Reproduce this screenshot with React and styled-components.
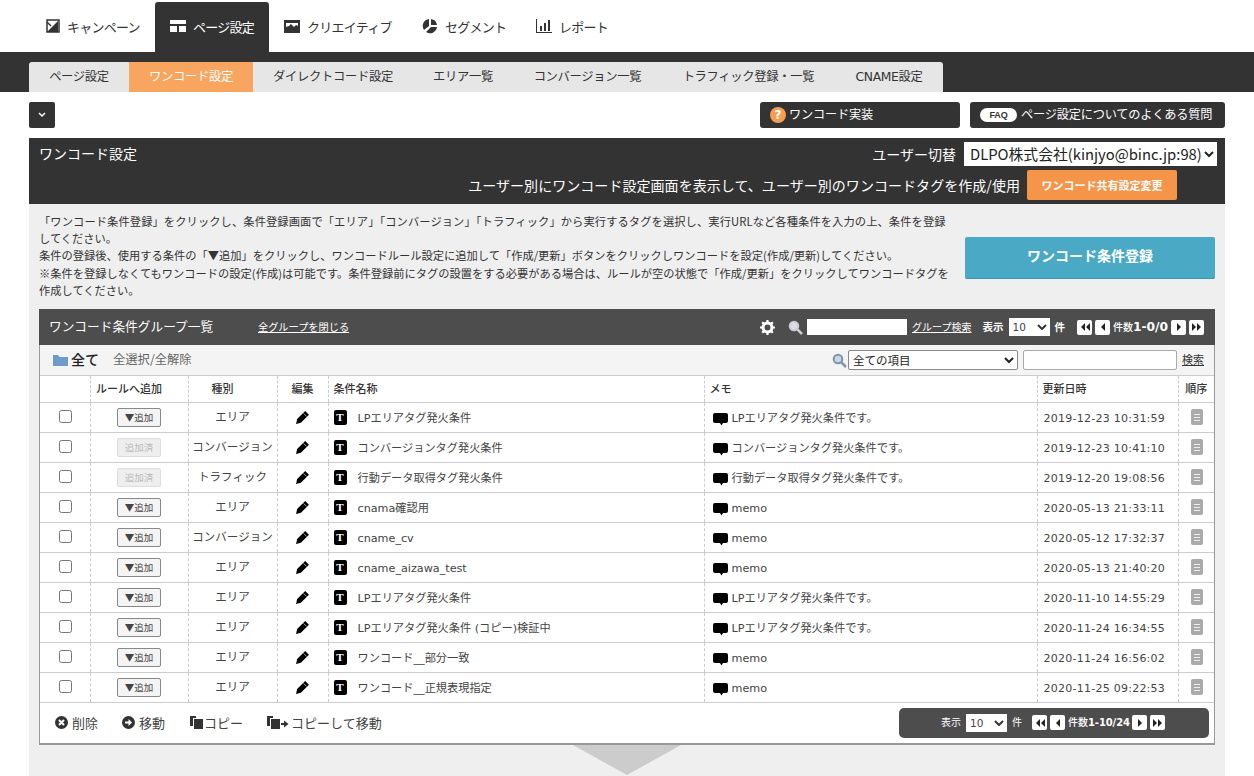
import React from "react";
import styled, { createGlobalStyle } from "styled-components";

const Global = createGlobalStyle`
  html, body { margin: 0; padding: 0; background: #fff; overflow: hidden; }
  body {
    width: 1254px;
    height: 776px;
    font-family: "DejaVu Sans", "Noto Sans CJK JP", sans-serif;
    font-size: 12px;
    color: #333;
  }
  * { box-sizing: border-box; }
`;

const Page = styled.div`
  width: 1254px;
  height: 776px;
  overflow: hidden;
`;

const MainNav = styled.nav`
  height: 52px;
  padding: 2px 0 0 31px;
  display: flex;
  align-items: stretch;
`;

const MainItem = styled.a`
  display: flex;
  align-items: center;
  gap: 7px;
  width: ${(p) => p.$w}px;
  padding: 0 0 2px 15px;
  font-family: "Noto Sans CJK JP", sans-serif;
  font-size: 13px;
  letter-spacing: -0.75px;
  color: ${(p) => (p.$active ? "#fff" : "#333")};
  background: ${(p) => (p.$active ? "#333" : "transparent")};
  border-radius: 3px 3px 0 0;
  svg { flex: none; }
`;

const SubBand = styled.div`
  height: 40px;
  background: #333;
  padding: 10px 0 0 29px;
  display: flex;
`;

const SubTabs = styled.div`
  display: flex;
  height: 30px;
  background: #e6e6e6;
  border-radius: 3px 3px 0 0;
  overflow: hidden;
`;

const SubTab = styled.a`
  width: ${(p) => p.$w}px;
  padding-bottom: 2px;
  display: flex;
  align-items: center;
  justify-content: center;
  font-family: "DejaVu Sans", "Noto Sans CJK JP", sans-serif;
  font-size: 12.3px;
  letter-spacing: -0.3px;
  color: ${(p) => (p.$active ? "#fff" : "#333")};
  background: ${(p) => (p.$active ? "#f7a55f" : "transparent")};
`;

const ToolBar = styled.div`
  height: 46px;
  padding: 10px 29px 0;
  display: flex;
  gap: 10px;
`;

const Chevron = styled.button`
  width: 26px;
  height: 26px;
  margin-right: auto;
  padding: 0;
  border: none;
  border-radius: 2px;
  background: #333;
  display: flex;
  align-items: center;
  justify-content: center;
`;

const HelpButton = styled.a`
  width: ${(p) => p.$w}px;
  height: 26px;
  padding: 0 0 2px 10px;
  display: flex;
  align-items: center;
  gap: 3px;
  border-radius: 3px;
  background: #333;
  color: #fff;
  font-family: "Noto Sans CJK JP", sans-serif;
  font-size: 12.2px;
  letter-spacing: -0.2px;
`;

const Question = styled.span`
  width: 16px;
  height: 16px;
  margin-top: 2px;
  border-radius: 50%;
  background: #f59e4f;
  color: #fff;
  font: bold 12px/16px "DejaVu Sans", sans-serif;
  text-align: center;
`;

const FaqPill = styled.span`
  width: 37px;
  height: 14px;
  margin: 2px 1px 0 0;
  border-radius: 7px;
  background: #fff;
  color: #333;
  font: bold 9px/14px "Liberation Sans", sans-serif;
  text-align: center;
`;

const Panel = styled.section`
  margin: 0 29px;
  height: 638px;
  background: #efefef;
  position: relative;
`;

const PanelHead = styled.header`
  height: 66px;
  background: #333;
  color: #fff;
  padding: 3px 8px 0 10px;
  font-family: "Noto Sans CJK JP", sans-serif;
`;

const HeadRow = styled.div`
  height: 25px;
  display: flex;
  align-items: center;
  justify-content: space-between;
  font-size: 14px;
  > span { margin-top: -1px; }
`;

const UserSwitch = styled.div`
  display: flex;
  align-items: center;
  gap: 8px;
  font-size: 14px;
  line-height: 20px;
`;

const UserSelect = styled.select`
  width: 253px;
  height: 24px;
  padding: 0 0 0 2px;
  border: none;
  background: #fff;
  color: #222;
  font-family: "Noto Sans CJK JP", sans-serif;
  font-size: 14.8px;
`;

const ShareRow = styled.div`
  display: flex;
  justify-content: flex-end;
  align-items: center;
  gap: 7px;
  margin-top: 4px;
  padding-right: 40px;
  font-size: 14px;
  letter-spacing: 0.05px;
`;

const ShareButton = styled.a`
  width: 150px;
  height: 30px;
  border-radius: 2px;
  background: #f5954a;
  color: #fff;
  display: flex;
  align-items: center;
  justify-content: center;
  font-size: 11px;
  font-weight: 700;
  letter-spacing: 0;
`;

const Intro = styled.div`
  height: 105px;
  padding: 9px 10px 0;
  display: flex;
  justify-content: space-between;
`;

const IntroText = styled.p`
  margin: 0;
  font-family: "Noto Sans CJK JP", sans-serif;
  font-size: 11.25px;
  line-height: 17.2px;
  color: #333;
  white-space: nowrap;
`;

const WideLine = styled.span`
  letter-spacing: 0.1px;
`;

const RegisterButton = styled.a`
  width: 250px;
  height: 42px;
  margin: 24px 0 0;
  padding-bottom: 6px;
  border-radius: 2px;
  background: #4aa9c4;
  border-bottom: 1px solid #3c93ab;
  color: #fff;
  display: flex;
  align-items: center;
  justify-content: center;
  font-family: "Noto Sans CJK JP", sans-serif;
  font-size: 14px;
  font-weight: 700;
`;

const ListCard = styled.div`
  margin: 0 10px;
  height: 436px;
  border: 1px solid #999;
  border-top: none;
  border-bottom-width: 2px;
  background: #fff;
`;

const ListHead = styled.div`
  height: 36px;
  margin: 0 -1px;
  padding: 0 11px 0 10px;
  background: #4d4d4d;
  color: #fff;
  display: flex;
  align-items: center;
  font-family: "Noto Sans CJK JP", sans-serif;
`;

const ListTitle = styled.span`
  width: 209px;
  margin-top: -3px;
  font-size: 12.7px;
`;

const WhiteLink = styled.a`
  margin-top: -2px;
  font-size: ${(p) => p.$size}px;
  color: #fff;
  text-decoration: underline;
  ${(p) => p.$grow && "margin-right: auto;"}
`;

const GearSlot = styled.span`
  display: flex;
  margin-right: 13px;
`;

const HeadSearch = styled.div`
  height: 16px;
  width: 100px;
  margin: 0 5px 0 4px;
  background: #fff;
`;

const SmallSelect = styled.div`
  width: ${(p) => p.$w}px;
  height: 18px;
  padding: 0 3px 0 4px;
  margin: 0 5px;
  background: #fff;
  color: #444;
  display: flex;
  align-items: center;
  justify-content: space-between;
  font: 10.5px "DejaVu Sans", sans-serif;
`;

const BoldLabel = styled.span`
  margin-top: -2px;
  font-size: 10.5px;
  font-weight: 700;
  ${(p) => p.$ml && `margin-left: ${p.$ml}px;`}
`;

const PlainLabel = styled.span`
  margin-top: -2px;
  font-size: 10px;
`;

const Pager = styled.div`
  display: flex;
  align-items: center;
  gap: 3px;
  margin-left: ${(p) => p.$ml}px;
`;

const PageBtn = styled.span`
  width: 15px;
  height: 15px;
  border-radius: 2px;
  background: #fff;
  display: flex;
  align-items: center;
  justify-content: center;
`;

const Count = styled.span`
  width: ${(p) => p.$w}px;
  margin-top: -2px;
  font-size: 10px;
  font-weight: 500;
  white-space: nowrap;
  text-align: center;
  b {
    font-family: "DejaVu Sans", sans-serif;
    font-size: ${(p) => p.$num}px;
    font-weight: 700;
    letter-spacing: -0.1px;
  }
`;

const FilterRow = styled.div`
  height: 31px;
  padding: 0 10px 0 13px;
  background: #f4f4f4;
  border-bottom: 1px solid #ccc;
  display: flex;
  align-items: center;
  font-family: "Noto Sans CJK JP", sans-serif;
`;

const AllLabel = styled.strong`
  margin: -3px 0 0 3px;
  font-size: 14px;
  font-weight: 500;
  color: #222;
`;

const SelectAll = styled.a`
  margin: -3px auto 0 14px;
  font-size: 12.3px;
  color: #666;
`;

const FilterSelect = styled.select`
  width: 170px;
  height: 20px;
  margin-left: 1px;
  padding: 0;
  border: 1px solid #888;
  border-radius: 2px;
  background: #fff;
  color: #222;
  font-family: "Noto Sans CJK JP", sans-serif;
  font-size: 11.5px;
`;

const FilterInput = styled.input`
  width: 154px;
  height: 20px;
  margin: 0 5px;
  border: 1px solid #aaa;
  border-radius: 2px;
  background: #fff;
`;

const SearchLink = styled.a`
  margin-top: -2px;
  font-size: 11px;
  color: #333;
  text-decoration: underline;
`;

const Table = styled.table`
  width: 1174px;
  border-collapse: collapse;
  table-layout: fixed;
  font-family: "Noto Sans CJK JP", sans-serif;
  font-size: 11.5px;
`;

const Th = styled.th`
  height: 26px;
  padding: 0 ${(p) => p.$pr ?? 0}px 1px ${(p) => (p.$left ? 5 : 0)}px;
  border-bottom: 1px solid #ccc;
  border-left: 1px dashed #ccc;
  font-weight: 500;
  font-size: 11px;
  text-align: ${(p) => (p.$left ? "left" : "center")};
  color: #333;
  &:first-child { border-left: none; }
`;

const Td = styled.td`
  height: 30px;
  padding: 0 ${(p) => (p.$left ? "5px" : "0")} ${(p) => (p.$left ? 1 : 2)}px;
  border-bottom: 1px solid #ccc;
  border-left: 1px dashed #ccc;
  text-align: ${(p) => (p.$left ? "left" : "center")};
  color: #444;
  white-space: nowrap;
  &:first-child { border-left: none; }
`;

const DateText = styled.span`
  font-family: "DejaVu Sans", sans-serif;
  font-size: 11px;
  letter-spacing: 0.25px;
  color: #444;
  margin-left: 1px;
`;

const Check = styled.span`
  display: block;
  width: 13px;
  height: 13px;
  margin: 1px 0 0 19px;
  border: 1px solid #767676;
  border-radius: 2.5px;
  background: #fff;
`;

const AddButton = styled.span`
  display: flex;
  align-items: center;
  justify-content: center;
  width: 44px;
  height: 19px;
  margin: 2px auto 0;
  padding-bottom: 1px;
  border: 1px solid ${(p) => (p.$done ? "#ddd" : "#888")};
  border-radius: 2px;
  background: ${(p) => (p.$done ? "#eee" : "#f4f4f4")};
  color: ${(p) => (p.$done ? "#bbb" : "#444")};
  font-size: 9.5px;
`;

const PencilSlot = styled.span`
  display: flex;
  justify-content: center;
  margin-top: 3px;
`;

const NameCell = styled.span`
  display: flex;
  align-items: center;
  gap: 11px;
  padding-top: 3px;
  font-family: "DejaVu Sans", "Noto Sans CJK JP", sans-serif;
  font-size: 11.2px;
  line-height: 15px;
`;

const TBadge = styled.span`
  flex: none;
  width: 13px;
  height: 15px;
  margin-top: -2px;
  border-radius: 2px;
  background: #000;
  color: #fff;
  font: bold 11px/15px "Liberation Serif", serif;
  text-align: center;
`;

const MemoCell = styled.span`
  display: flex;
  align-items: center;
  gap: 4px;
  padding: 3px 0 0 3px;
  font-family: "DejaVu Sans", "Noto Sans CJK JP", sans-serif;
  font-size: 11.2px;
  line-height: 15px;
  svg {
    flex: none;
    margin-top: 2px;
  }
`;

const Handle = styled.span`
  display: flex;
  flex-direction: column;
  gap: 2px;
  align-items: center;
  justify-content: center;
  width: 12px;
  height: 16px;
  margin: 2px 0 0 12px;
  border-radius: 2px;
  background: #aaa;
  i {
    width: 6px;
    height: 1px;
    background: #eee;
  }
`;

const Footer = styled.div`
  height: 41px;
  padding: 0 5px 1px 15px;
  display: flex;
  align-items: center;
`;

const Action = styled.a`
  display: flex;
  align-items: center;
  gap: ${(p) => p.$gap}px;
  margin-right: ${(p) => p.$mr}px;
  font-family: "Noto Sans CJK JP", sans-serif;
  font-size: 13px;
  line-height: 18px;
  color: #444;
`;

const FootPager = styled.div`
  width: 310px;
  height: 30px;
  margin-left: auto;
  padding-left: 42px;
  border-radius: 5px;
  background: #4d4d4d;
  color: #fff;
  display: flex;
  align-items: center;
  font-family: "Noto Sans CJK JP", sans-serif;
`;

const Arrow = styled.div`
  width: 0;
  height: 0;
  position: absolute;
  left: 544px;
  bottom: 1px;
  border-left: 54px solid transparent;
  border-right: 54px solid transparent;
  border-top: 30px solid #ccc;
`;

const SelArrow = () => (
  <svg width="10" height="6" viewBox="0 0 10 6">
    <path d="M1 1l4 4 4-4" fill="none" stroke="#333" strokeWidth="2" />
  </svg>
);

const PageIcon = ({ kind }) => {
  const paths = {
    first: "M5 1v8L1 5zM10 1v8L6 5z",
    prev: "M7 1v8L3 5z",
    next: "M3 1v8l4-4z",
    last: "M0 1v8l4-4zM5 1v8l4-4z",
  };
  return (
    <PageBtn>
      <svg width="10" height="10" viewBox="0 0 10 10">
        <path d={paths[kind]} fill="#222" />
      </svg>
    </PageBtn>
  );
};

const Pencil = () => (
  <svg width="15" height="15" viewBox="0 0 14 14">
    <path d="M9.500 1L13 4.500 5.500 12 1 13l1-4.500z" fill="#000" />
    <path d="M8 3.200l2.800 2.800" stroke="#fff" strokeWidth="0.6" />
  </svg>
);

const Balloon = () => (
  <svg width="15" height="14" viewBox="0 0 15 14">
    <path d="M2 1h11a2 2 0 0 1 2 2v6a2 2 0 0 1-2 2H10l-1.500 2.500L7 11H2a2 2 0 0 1-2-2V3a2 2 0 0 1 2-2z" fill="#000" />
  </svg>
);

const Magnifier = ({ glass = "#c5d8ea", rim = "#7f95a8" }) => (
  <svg width="15" height="15" viewBox="0 0 15 15">
    <circle cx="6" cy="6" r="4.300" fill={glass} stroke={rim} strokeWidth="2" />
    <path d="M9.500 9.500L14 14" stroke={rim} strokeWidth="2.500" />
  </svg>
);

const Gear = () => (
  <svg width="15" height="15" viewBox="0 0 15 15">
    <circle cx="7.500" cy="7.500" r="4.500" fill="none" stroke="#fff" strokeWidth="3" />
    <path
      d="M7.500 0v15M0 7.500h15M2.200 2.200l10.600 10.600M12.800 2.200L2.200 12.800"
      stroke="#fff"
      strokeWidth="2.200"
      strokeDasharray="2.400 10.200"
    />
  </svg>
);

const NavIcons = {
  campaign: (
    <svg width="14" height="14" viewBox="0 0 14 14">
      <path d="M1 1h12v12H1z" fill="none" stroke="#333" strokeWidth="1.500" />
      <path d="M1 13L12 2v11z" fill="#333" />
      <path d="M1 3l4 4" stroke="#333" strokeWidth="1.500" />
    </svg>
  ),
  page: (
    <svg width="16" height="14" viewBox="0 0 16 14" fill="#fff">
      <path d="M0 1h16v4H0zM0 7h7v6H0zM9 7h7v6H9z" />
    </svg>
  ),
  creative: (
    <svg width="16" height="13" viewBox="0 0 16 13">
      <path d="M0 0h16v13H0z" fill="#333" />
      <path d="M2 3h12v3l-2-1-2 2-3-3-2 2-3 1z" fill="#fff" />
    </svg>
  ),
  segment: (
    <svg width="16" height="16" viewBox="0 0 16 16" fill="#333">
      <path d="M7 1v7l-5 4A7 7 0 0 1 7 1zM9 1a7 7 0 0 1 6 6H9zM15 9a7 7 0 0 1-11 5l5-5z" />
    </svg>
  ),
  report: (
    <svg width="16" height="14" viewBox="0 0 16 14" fill="#333">
      <path d="M0 0h1v13h15v1H0zM4 7h2v5H4zM8 4h2v8H8zM12 1h2v11h-2z" />
    </svg>
  ),
};

const mainItems = [
  { label: "キャンペーン", icon: "campaign", w: 124 },
  { label: "ページ設定", icon: "page", w: 114, active: true },
  { label: "クリエイティブ", icon: "creative", w: 138 },
  { label: "セグメント", icon: "segment", w: 114 },
  { label: "レポート", icon: "report", w: 100 },
];

const subTabs = [
  ["ページ設定", 100],
  ["ワンコード設定", 124, true],
  ["ダイレクトコード設定", 160],
  ["エリア一覧", 100],
  ["コンバージョン一覧", 149],
  ["トラフィック登録・一覧", 173],
  ["CNAME設定", 108],
];

const AREA_MEMO = "LPエリアタグ発火条件です。";

const rows = [
  ["エリア", "LPエリアタグ発火条件", AREA_MEMO, "2019-12-23 10:31:59"],
  ["コンバージョン", "コンバージョンタグ発火条件", "コンバージョンタグ発火条件です。", "2019-12-23 10:41:10", true],
  ["トラフィック", "行動データ取得タグ発火条件", "行動データ取得タグ発火条件です。", "2019-12-20 19:08:56", true],
  ["エリア", "cnama確認用", "memo", "2020-05-13 21:33:11"],
  ["コンバージョン", "cname_cv", "memo", "2020-05-12 17:32:37"],
  ["エリア", "cname_aizawa_test", "memo", "2020-05-13 21:40:20"],
  ["エリア", "LPエリアタグ発火条件", AREA_MEMO, "2020-11-10 14:55:29"],
  ["エリア", "LPエリアタグ発火条件 (コピー)検証中", AREA_MEMO, "2020-11-24 16:34:55"],
  ["エリア", "ワンコード__部分一致", "memo", "2020-11-24 16:56:02"],
  ["エリア", "ワンコード__正規表現指定", "memo", "2020-11-25 09:22:53"],
];

const CircleIcon = ({ kind }) => (
  <svg width="13" height="13" viewBox="0 0 13 13">
    <circle cx="6.500" cy="6.500" r="6.500" fill="#333" />
    {kind === "x" ? (
      <path d="M4 4l5 5M9 4l-5 5" stroke="#fff" strokeWidth="2" />
    ) : (
      <path d="M3 5.500h3.500V3l3.500 3.500L6.500 10V7.500H3z" fill="#fff" />
    )}
  </svg>
);

const CopyIcon = ({ arrow }) => (
  <svg width={arrow ? 22 : 13} height="13" viewBox={arrow ? "0 0 22 13" : "0 0 13 13"} fill="#333">
    <path d="M0 0h6v2H3v8H0zM4 3h9v10H4z" />
    {arrow && <path d="M14 7h3V4.500L21.500 8 17 11.500V9h-3z" />}
  </svg>
);

export default function App() {
  return (
    <Page>
      <Global />
      <MainNav>
        {mainItems.map((m) => (
          <MainItem key={m.label} $w={m.w} $active={m.active}>
            {NavIcons[m.icon]}
            {m.label}
          </MainItem>
        ))}
      </MainNav>
      <SubBand>
        <SubTabs>
          {subTabs.map(([label, w, active]) => (
            <SubTab key={label} $w={w} $active={active}>
              {label}
            </SubTab>
          ))}
        </SubTabs>
      </SubBand>
      <ToolBar>
        <Chevron aria-label="開閉">
          <svg width="8" height="6" viewBox="0 0 8 6">
            <path d="M1 1l3 3 3-3" fill="none" stroke="#fff" strokeWidth="1.500" />
          </svg>
        </Chevron>
        <HelpButton $w={200}>
          <Question>?</Question>
          ワンコード実装
        </HelpButton>
        <HelpButton $w={255}>
          <FaqPill>FAQ</FaqPill>
          ページ設定についてのよくある質問
        </HelpButton>
      </ToolBar>
      <Panel>
        <PanelHead>
          <HeadRow>
            <span>ワンコード設定</span>
            <UserSwitch>
              ユーザー切替
              <UserSelect defaultValue="a">
                <option value="a">DLPO株式会社(kinjyo@binc.jp:98)</option>
              </UserSelect>
            </UserSwitch>
          </HeadRow>
          <ShareRow>
            ユーザー別にワンコード設定画面を表示して、ユーザー別のワンコードタグを作成/使用
            <ShareButton>ワンコード共有設定変更</ShareButton>
          </ShareRow>
        </PanelHead>
        <Intro>
          <IntroText>
            <WideLine>
              「ワンコード条件登録」をクリックし、条件登録画面で「エリア」「コンバージョン」「トラフィック」から実行するタグを選択し、実行URLなど各種条件を入力の上、条件を登録
            </WideLine>
            <br />
            してください。
            <br />
            条件の登録後、使用する条件の「▼追加」をクリックし、ワンコードルール設定に追加して「作成/更新」ボタンをクリックしワンコードを設定(作成/更新)してください。
            <br />
            ※条件を登録しなくてもワンコードの設定(作成)は可能です。条件登録前にタグの設置をする必要がある場合は、ルールが空の状態で「作成/更新」をクリックしてワンコードタグを
            <br />
            作成してください。
          </IntroText>
          <RegisterButton>ワンコード条件登録</RegisterButton>
        </Intro>
        <ListCard>
          <ListHead>
            <ListTitle>ワンコード条件グループ一覧</ListTitle>
            <WhiteLink $grow $size={10.2}>全グループを閉じる</WhiteLink>
            <GearSlot>
              <Gear />
            </GearSlot>
            <Magnifier glass="#dde" rim="#ccc" />
            <HeadSearch />
            <WhiteLink $size={10}>グループ検索</WhiteLink>
            <BoldLabel $ml={11}>表示</BoldLabel>
            <SmallSelect $w={41}>
              10 <SelArrow />
            </SmallSelect>
            <BoldLabel>件</BoldLabel>
            <Pager $ml={12}>
              <PageIcon kind="first" />
              <PageIcon kind="prev" />
              <Count $w={55} $num={12.3}>
                件数<b>1-0/0</b>
              </Count>
              <PageIcon kind="next" />
              <PageIcon kind="last" />
            </Pager>
          </ListHead>
          <FilterRow>
            <svg width="15" height="12" viewBox="0 0 15 12">
              <path d="M0 1h5l1.500 2H15v9H0z" fill="#6d9ccb" />
            </svg>
            <AllLabel>全て</AllLabel>
            <SelectAll>全選択/全解除</SelectAll>
            <Magnifier />
            <FilterSelect defaultValue="all">
              <option value="all">全ての項目</option>
            </FilterSelect>
            <FilterInput />
            <SearchLink>検索</SearchLink>
          </FilterRow>
          <Table>
            <colgroup>
              <col style={{ width: 50 }} />
              <col style={{ width: 98 }} />
              <col style={{ width: 89 }} />
              <col style={{ width: 51 }} />
              <col style={{ width: 376 }} />
              <col style={{ width: 333 }} />
              <col style={{ width: 141 }} />
              <col style={{ width: 36 }} />
            </colgroup>
            <thead>
              <tr>
                <Th />
                <Th $pr={20}>ルールへ追加</Th>
                <Th $pr={20}>種別</Th>
                <Th>編集</Th>
                <Th $left>条件名称</Th>
                <Th $left>メモ</Th>
                <Th $left>更新日時</Th>
                <Th>順序</Th>
              </tr>
            </thead>
            <tbody>
              {rows.map(([kind, name, memo, date, done], i) => (
                <tr key={i}>
                  <Td>
                    <Check />
                  </Td>
                  <Td>
                    <AddButton $done={done}>{done ? "追加済" : "▼追加"}</AddButton>
                  </Td>
                  <Td>{kind}</Td>
                  <Td>
                    <PencilSlot>
                      <Pencil />
                    </PencilSlot>
                  </Td>
                  <Td $left>
                    <NameCell>
                      <TBadge>T</TBadge>
                      {name}
                    </NameCell>
                  </Td>
                  <Td $left>
                    <MemoCell>
                      <Balloon />
                      {memo}
                    </MemoCell>
                  </Td>
                  <Td $left>
                    <DateText>{date}</DateText>
                  </Td>
                  <Td>
                    <Handle>
                      <i />
                      <i />
                      <i />
                    </Handle>
                  </Td>
                </tr>
              ))}
            </tbody>
          </Table>
          <Footer>
            <Action $mr={24} $gap={4}>
              <CircleIcon kind="x" />
              削除
            </Action>
            <Action $mr={25} $gap={4}>
              <CircleIcon kind="arrow" />
              移動
            </Action>
            <Action $mr={24} $gap={1}>
              <CopyIcon />
              コピー
            </Action>
            <Action $mr={0} $gap={2}>
              <CopyIcon arrow />
              コピーして移動
            </Action>
            <FootPager>
              <PlainLabel>表示</PlainLabel>
              <SmallSelect $w={41}>
                10 <SelArrow />
              </SmallSelect>
              <PlainLabel>件</PlainLabel>
              <Pager $ml={10}>
                <PageIcon kind="first" />
                <PageIcon kind="prev" />
                <Count $w={61} $num={10}>
                  件数<b>1-10/24</b>
                </Count>
                <PageIcon kind="next" />
                <PageIcon kind="last" />
              </Pager>
            </FootPager>
          </Footer>
        </ListCard>
        <Arrow />
      </Panel>
    </Page>
  );
}
